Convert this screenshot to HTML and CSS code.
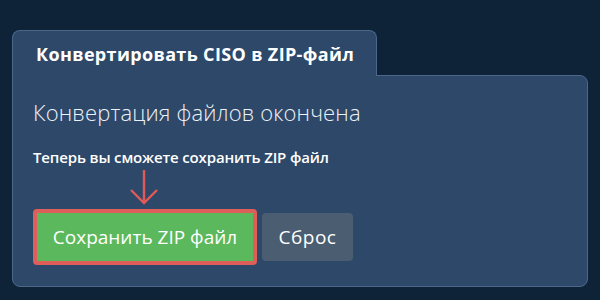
FILE: index.html
```html
<!DOCTYPE html>
<html lang="ru">
<head>
    <meta charset="UTF-8">
    <meta name="viewport" content="width=device-width, initial-scale=1.0">
    <title>CISO в ZIP</title>
    <link rel="stylesheet" href="styles.css">
</head>
<body>
    <div class="converter">
        <div class="tab">Конвертировать CISO в ZIP-файл</div>
        <div class="panel">
            <h2 class="status">Конвертация файлов окончена</h2>
            <p class="hint">Теперь вы сможете сохранить ZIP файл</p>
            <!-- pointer to the save button -->
            <svg class="pointer" width="40" height="42" viewBox="0 0 40 42">
                <path d="M20 3 V36 M7 23 L20 36 L33 23" fill="none" stroke="#e05a58" stroke-width="2.4"/>
            </svg>
            <div class="actions">
                <button class="button save">Сохранить ZIP файл</button>
                <button class="button reset">Сброс</button>
            </div>
        </div>
    </div>
</body>
</html>
```

FILE: styles.css
```css
body {
    font-family: 'Open Sans', 'Noto Sans', sans-serif;
    background-color: #0f2338;
    margin: 0;
    padding: 30px 12px 0;
    color: #ffffff;
}

.converter {
    width: 576px;
}

.tab {
    display: inline-block;
    position: relative;
    z-index: 1;
    width: 365px;
    height: 46px;
    box-sizing: border-box;
    padding: 0 0 0 23px;
    line-height: 46px;
    font-size: 18px;
    font-weight: 700;
    letter-spacing: 0.35px;
    background-color: #2d4869;
    border: 1px solid #4b6789;
    border-bottom: none;
    border-radius: 8px 8px 0 0;
    vertical-align: top;
}

.panel {
    margin-top: -1px;
    background-color: #2d4869;
    border: 1px solid #4b6789;
    border-radius: 0 8px 8px 8px;
    padding: 22px 20px 21px;
}

.status {
    margin: 0;
    font-size: 22px;
    font-weight: 300;
    line-height: 28px;
    letter-spacing: 0.15px;
    color: #eef2f7;
}

.hint {
    margin: 21px 0 0;
    font-size: 15px;
    font-weight: 600;
    line-height: 20px;
    letter-spacing: -0.15px;
}

.pointer {
    display: block;
    margin-left: 91px;
}

.actions {
    display: flex;
    align-items: center;
    gap: 5px;
}

.button {
    font-family: inherit;
    font-size: 19px;
    color: #ffffff;
    border: none;
    cursor: pointer;
}

.button.save {
    width: 224px;
    height: 56px;
    background-color: #5cb85c;
    border: 4px solid #de5e5a;
    border-radius: 4px;
}

.button.reset {
    width: 91px;
    height: 48px;
    background-color: #4b5d70;
    border-radius: 4px;
    letter-spacing: 0.5px;
}
```
